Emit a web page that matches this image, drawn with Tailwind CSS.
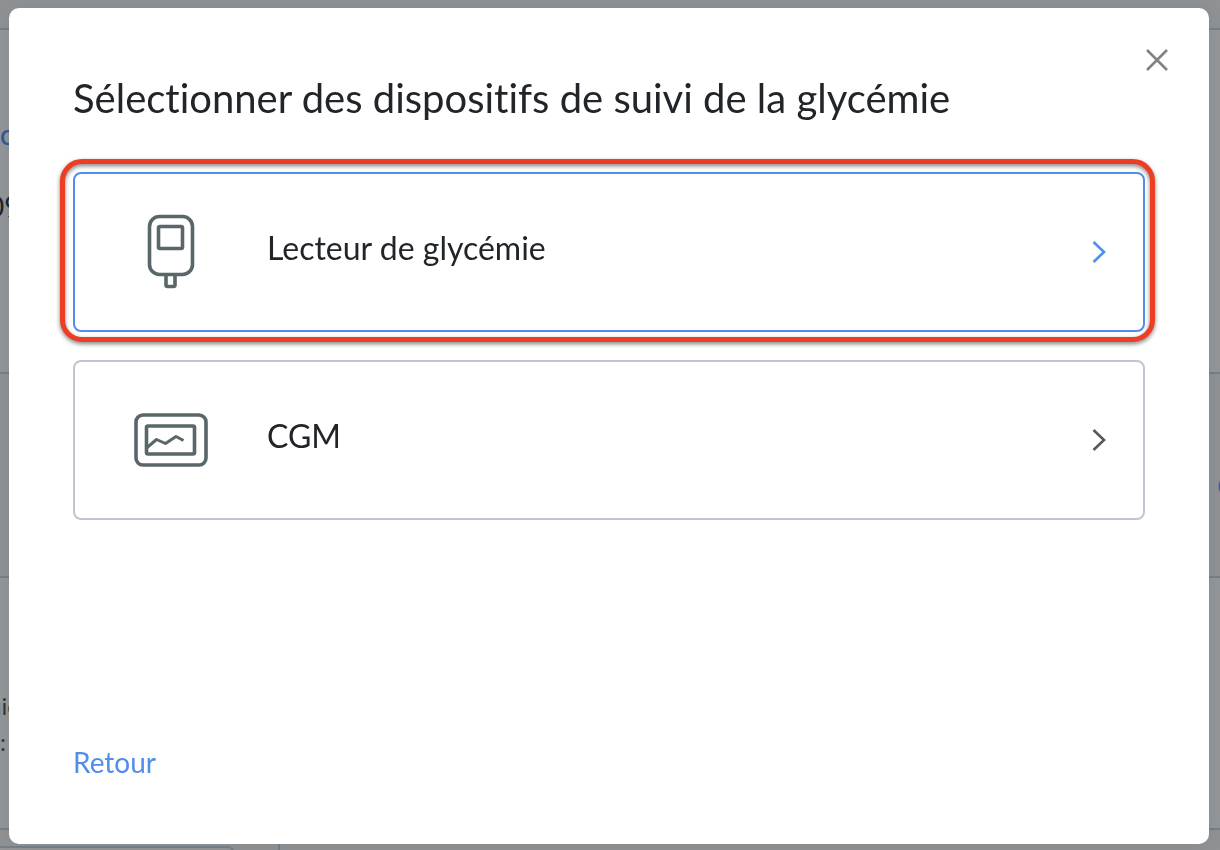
<!DOCTYPE html>
<html lang="fr">
<head>
<meta charset="utf-8">
<meta name="viewport" content="width=device-width, initial-scale=1">
<title>Sélectionner des dispositifs</title>
<script src="https://cdn.jsdelivr.net/npm/@tailwindcss/browser@4"></script>
</head>
<body class="h-screen overflow-hidden bg-[#949799] font-['Lato',sans-serif] text-[#212529] [font-variant-ligatures:none]">
<!-- Page behind the dialog -->
<div class="flex h-full flex-col overflow-hidden" aria-hidden="true">
  <div class="h-[30px] shrink-0 border-b-2 border-[#777f88] bg-[#8f9396]"></div>
  <div class="flex h-[344px] shrink-0 flex-col border-b-2 border-[#777f88] pt-[86px] text-[28px] leading-9">
    <p class="font-medium text-[#35599a]">c</p>
    <p class="-ml-3 mt-9">09</p>
  </div>
  <div class="flex h-[204px] shrink-0 justify-end border-b-2 border-[#777f88] bg-[#8f9396] pt-[94px] text-[28px] leading-9">
    <p class="-mr-4 text-[#35599a]">C</p>
  </div>
  <div class="h-[252px] shrink-0 border-b-2 border-[#777f88] pt-[110px] text-[24px] leading-9">
    <p class="-ml-3 text-[#33383c]">nie</p>
    <p class="text-[#33383c]">:</p>
  </div>
  <div class="flex grow bg-[#8f9396] pt-4">
    <div class="-ml-2 h-10 w-[242px] rounded-md border-2 border-[#777f88] bg-[#949799]"></div>
    <div class="-mt-4 ml-11 h-10 w-[2px] bg-[#777f88]"></div>
  </div>
</div>
<!-- Dialog -->
<div class="fixed inset-0 flex pt-2 pr-[11px] pb-[6px] pl-[9px]">
  <main role="dialog" aria-modal="true" aria-labelledby="title" class="relative flex grow flex-col rounded-[10px] bg-white px-16 pt-[66px] pb-[62px] shadow-[0_0_24px_rgba(0,0,0,0.08)]">
    <button type="button" aria-label="Fermer" class="absolute top-9 right-9 flex size-8 items-center justify-center text-[#808285]">
      <svg class="size-8" viewBox="0 0 32 32" fill="none" stroke="currentColor" stroke-width="2.6"><path d="M6 6L26 26M26 6L6 26"/></svg>
    </button>
    <h1 id="title" class="text-[40px] leading-[48px]">Sélectionner des dispositifs de suivi de la glycémie</h1>
    <div class="mt-[50px] flex flex-col gap-7">
      <button type="button" class="relative flex h-40 items-center rounded-lg border-2 border-[#518eea] bg-white pr-7 pl-14 text-left">
        <svg class="size-20 shrink-0" viewBox="0 0 80 80" fill="none" stroke="#59666a" stroke-width="3.6" stroke-linejoin="round"><rect x="18.500" y="4.500" width="43" height="58" rx="10"/><rect x="27.500" y="14.500" width="24" height="22" rx="1.5"/><path d="M35 62.500V73Q35 74.500 36.500 74.500H42.500Q44 74.500 44 73V62.500"/></svg>
        <span class="ml-14 grow pb-2 text-[32px] leading-10">Lecteur de glycémie</span>
        <svg class="size-8 shrink-0 text-[#518eea]" viewBox="0 0 32 32" fill="none" stroke="currentColor" stroke-width="2.6"><path d="M10.500 6L21 16L10.500 26"/></svg>
        <span class="pointer-events-none absolute -top-[15px] -right-[12px] -bottom-[12px] -left-[15px] rounded-[22px] border-5 border-[#ec3e24] drop-shadow-[0_2px_2px_rgba(0,0,0,0.5)]"></span>
      </button>
      <button type="button" class="flex h-40 items-center rounded-lg border-2 border-[#c1c5d2] bg-white pr-7 pl-14 text-left">
        <svg class="size-20 shrink-0" viewBox="0 0 80 80" fill="none" stroke="#59666a" stroke-width="3.6" stroke-linejoin="round"><rect x="5" y="15" width="70" height="50" rx="7"/><rect x="15.500" y="26" width="48" height="28" rx="1.500"/><path d="M15.500 48L25.500 39.500L34.500 43.500L45 36.500L52.500 40.500" stroke-width="3"/></svg>
        <span class="ml-14 grow pb-2 text-[32px] leading-10">CGM</span>
        <svg class="size-8 shrink-0 text-[#55585d]" viewBox="0 0 32 32" fill="none" stroke="currentColor" stroke-width="2.6"><path d="M10.500 6L21 16L10.500 26"/></svg>
      </button>
    </div>
    <a href="#" class="mt-auto self-start text-[28px] leading-10 text-[#518eea]">Retour</a>
  </main>
</div>
</body>
</html>
